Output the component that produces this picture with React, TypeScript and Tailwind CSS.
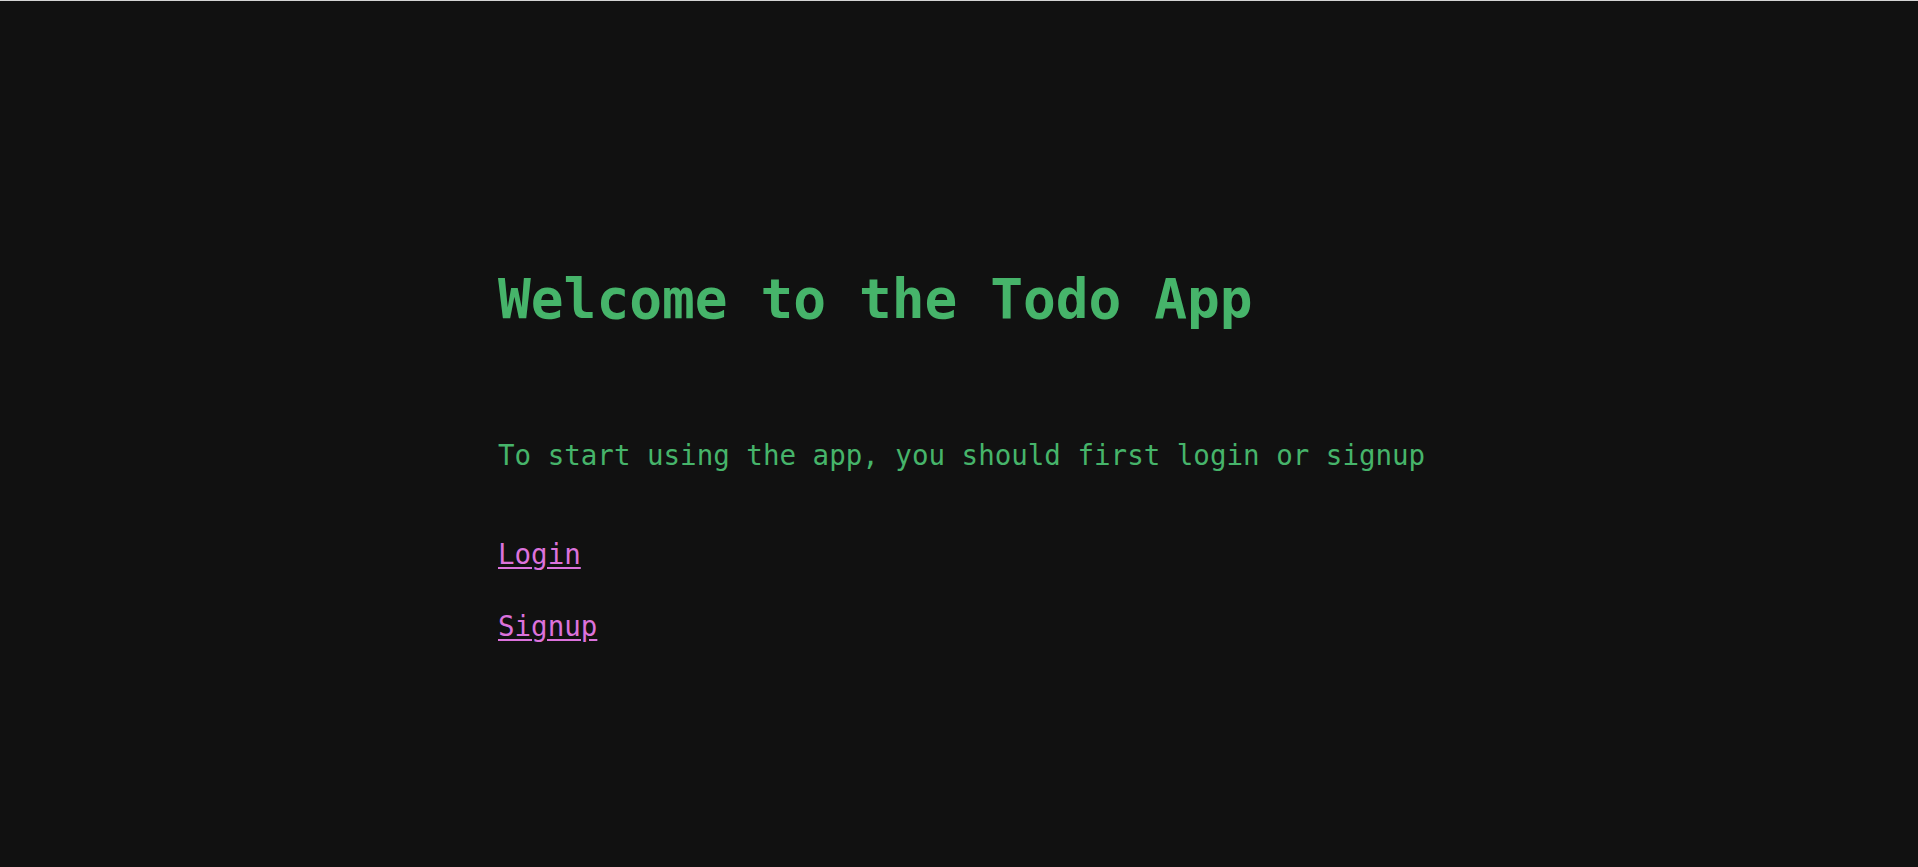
export default function App() {
  return (
    <div
      className="min-h-[867px] w-full bg-[#111111] border-t border-[#d4d4d4]"
      style={{ fontFamily: '"DejaVu Sans Mono", "Liberation Mono", monospace' }}
    >
      <div className="mx-auto w-[922px] flex flex-col items-start pt-[271px]">
        <h1 className="text-[54.5px] leading-[54px] font-bold text-[#46b46a] whitespace-nowrap">
          Welcome to the Todo App
        </h1>
        <p className="mt-[116px] text-[27.5px] leading-[27.5px] text-[#46b46a] whitespace-nowrap">
          To start using the app, you should first login or signup
        </p>
        <a
          href="#"
          className="mt-[71px] text-[27.5px] leading-[27.5px] text-[#dc72dc] underline underline-offset-[3px]"
        >
          Login
        </a>
        <a
          href="#"
          className="mt-[45px] text-[27.5px] leading-[27.5px] text-[#dc72dc] underline underline-offset-[3px]"
        >
          Signup
        </a>
      </div>
    </div>
  );
}
